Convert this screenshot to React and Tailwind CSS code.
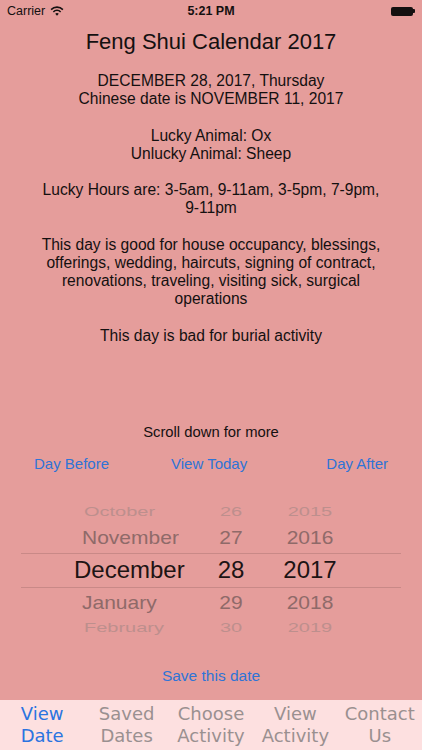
import React from 'react';

const rows = [
    { m: 'October', d: '26', y: '2015', h: 'h-[22px]', pl: 'pl-[63px]', txt: 'text-[20px] scale-y-[0.62] text-[#bd8f8d]' },
    { m: 'November', d: '27', y: '2016', h: 'h-[30px]', pl: 'pl-[61px]', txt: 'text-[21px] scale-y-[0.9] text-[#8f6a69]' },
    { m: 'December', d: '28', y: '2017', h: 'h-[35px]', pl: 'pl-[53px]', txt: 'text-[24px] text-[#1d1414]' },
    { m: 'January', d: '29', y: '2018', h: 'h-[30px]', pl: 'pl-[61px]', txt: 'text-[21px] scale-y-[0.9] text-[#8f6a69]' },
    { m: 'February', d: '30', y: '2019', h: 'h-[20px]', pl: 'pl-[63px]', txt: 'text-[20px] scale-y-[0.6] text-[#bd8f8d]' },
];

const tabs = [
    ['View', 'Date'],
    ['Saved', 'Dates'],
    ['Choose', 'Activity'],
    ['View', 'Activity'],
    ['Contact', 'Us'],
];

export default function App() {
    return (
        <div className="w-[422px] h-[750px] flex flex-col bg-[#e59d9b] font-['Liberation_Sans',Arial,sans-serif] text-[#141010] overflow-hidden">
            {/* status bar */}
            <div className="h-[22px] flex items-center justify-between px-[7px] text-[12.5px]">
                <div className="flex items-center gap-[5px] w-[100px]">
                    <span>Carrier</span>
                    <svg width="14" height="10" viewBox="0 0 15 11">
                        <path d="M1 4 A9 9 0 0 1 14 4" stroke="#141010" strokeWidth="1.7" fill="none" />
                        <path d="M3.5 6.5 A5.5 5.5 0 0 1 11.5 6.5" stroke="#141010" strokeWidth="1.7" fill="none" />
                        <path d="M5.5 8.5 L7.5 10.8 L9.5 8.5 A3 3 0 0 0 5.5 8.5 Z" fill="#141010" />
                    </svg>
                </div>
                <span className="font-bold">5:21 PM</span>
                <div className="w-[100px] flex justify-end items-center">
                    <div className="w-[22px] h-[9px] rounded-[2px] bg-[#141010]" />
                    <div className="w-[2px] h-[4px] bg-[#141010] rounded-r-[1px]" />
                </div>
            </div>

            <h1 className="text-[22px] text-center mt-[7px] leading-[26px]">Feng Shui Calendar 2017</h1>

            <div className="text-center text-[15.6px] leading-[18.2px] mt-[17px]">
                <p>DECEMBER 28, 2017, Thursday</p>
                <p>Chinese date is NOVEMBER 11, 2017</p>
                <p className="mt-[18.2px]">Lucky Animal: Ox</p>
                <p>Unlucky Animal: Sheep</p>
                <p className="mt-[18.2px]">Lucky Hours are: 3-5am, 9-11am, 3-5pm, 7-9pm,<br />9-11pm</p>
                <p className="mt-[18.2px]">
                    This day is good for house occupancy, blessings,<br />
                    offerings, wedding, haircuts, signing of contract,<br />
                    renovations, traveling, visiting sick, surgical<br />
                    operations
                </p>
                <p className="mt-[18.2px]">This day is bad for burial activity</p>
            </div>

            <p className="text-center text-[14.8px] mt-[78px] leading-[18px]">Scroll down for more</p>

            <div className="flex items-center text-[15px] text-[#2f74d6] mt-[14px] pl-[34px] pr-[34px] leading-[18px]">
                <span>Day Before</span>
                <span className="ml-[62px]">View Today</span>
                <span className="ml-auto">Day After</span>
            </div>

            {/* date picker */}
            <div className="mt-[28px] mx-[21px] flex flex-col">
                {rows.map((r, i) => (
                    <div
                        key={r.m}
                        className={`flex items-center ${r.h} ${i === 2 ? 'border-y border-[#c98987]' : ''}`}
                    >
                        <span className={`w-[180px] ${r.pl} ${r.txt}`}>{r.m}</span>
                        <span className={`w-[60px] text-center ${r.txt}`}>{r.d}</span>
                        <span className={`w-[98px] text-center ${r.txt}`}>{r.y}</span>
                    </div>
                ))}
            </div>

            <p className="text-center text-[15.5px] text-[#2f74d6] mt-[29px] leading-[18px]">Save this date</p>

            {/* tab bar */}
            <div className="mt-auto h-[50px] bg-[#fde0e0] grid grid-cols-5 text-[18px] leading-[22px] font-['DejaVu_Sans',Verdana,sans-serif] text-[#9a9090]">
                {tabs.map((t, i) => (
                    <div key={i} className={`flex flex-col items-center justify-center ${i === 0 ? 'text-[#2a74e0]' : ''}`}>
                        <span>{t[0]}</span>
                        <span>{t[1]}</span>
                    </div>
                ))}
            </div>
        </div>
    );
}
